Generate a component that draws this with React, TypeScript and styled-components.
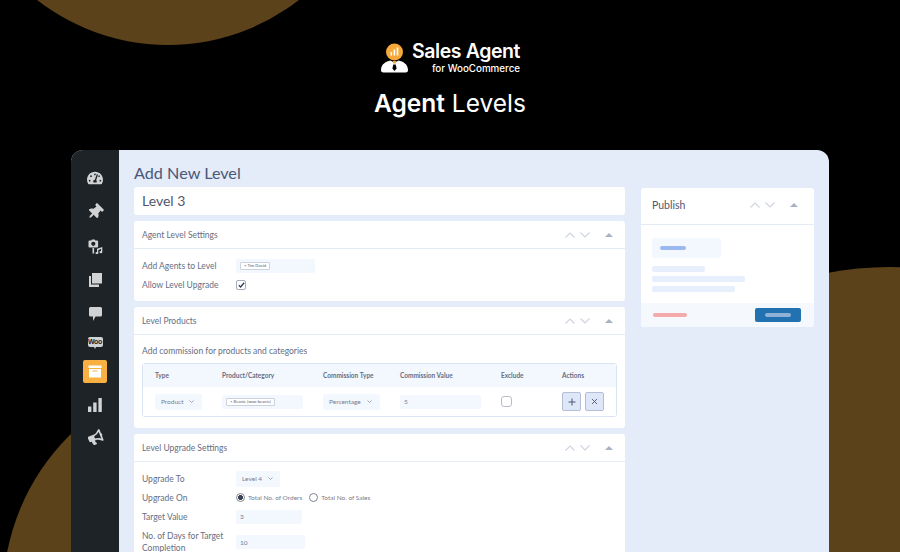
import { ReactNode } from "react";
import styled, { createGlobalStyle } from "styled-components";
import { FaTachometerAlt, FaThumbtack, FaBullhorn } from "react-icons/fa";

const GlobalStyle = createGlobalStyle`
  html, body { margin: 0; padding: 0; background: #000; }
  * { box-sizing: border-box; }
`;

const Page = styled.div`
  position: relative;
  width: 900px;
  height: 552px;
  overflow: hidden;
  background: #000;
  font-family: Lato, "Open Sans", "Liberation Sans", sans-serif;
  color: #50586f;
`;

interface BlobProps {
  $x: number;
  $y: number;
  $r: number;
}

const Blob = styled.div<BlobProps>`
  position: absolute;
  left: ${(p) => p.$x - p.$r}px;
  top: ${(p) => p.$y - p.$r}px;
  width: ${(p) => p.$r * 2}px;
  height: ${(p) => p.$r * 2}px;
  border-radius: 50%;
  background: #5c421a;
`;

const Header = styled.header`
  position: relative;
  height: 150px;
  padding-top: 42px;
  display: flex;
  flex-direction: column;
  align-items: center;
  color: #fff;
`;

const Logo = styled.div`
  display: flex;
  align-items: center;
  gap: 3px;
  height: 32px;
`;

const LogoText = styled.div`
  display: flex;
  flex-direction: column;
  align-items: flex-end;
  gap: 3px;
  font-family: Inter, "Liberation Sans", sans-serif;
`;

const LogoName = styled.div`
  font-size: 19.5px;
  line-height: 17px;
  font-weight: 600;
  letter-spacing: -0.4px;
`;

const LogoSub = styled.div`
  font-size: 9.8px;
  line-height: 11px;
  font-weight: 500;
`;

const PageTitle = styled.h1`
  margin: 15px 0 0;
  font-family: Inter, "Liberation Sans", sans-serif;
  font-size: 24.5px;
  line-height: 28px;
  font-weight: 400;
  span { font-weight: 600; }
`;

const Window = styled.div`
  position: relative;
  margin-left: 71px;
  width: 758px;
  height: 420px;
  display: flex;
  border-radius: 12px 12px 0 0;
  overflow: hidden;
  background: #e4ebf9;
`;

const Sidebar = styled.nav`
  width: 48px;
  flex: none;
  padding-top: 11px;
  background: #1d2327;
  display: flex;
  flex-direction: column;
  align-items: center;
  color: #d0d2d3;
`;

const SideItem = styled.div<{ $h: number }>`
  height: ${(p) => p.$h}px;
  width: 24px;
  display: flex;
  align-items: center;
  justify-content: center;
`;

const PinIcon = styled(FaThumbtack)`
  transform: rotate(45deg);
`;

const HornIcon = styled(FaBullhorn)`
  transform: rotate(-22deg);
`;

const ActiveBox = styled.div`
  width: 24px;
  height: 23px;
  border-radius: 2px;
  background: #f8b042;
  display: flex;
  align-items: center;
  justify-content: center;
`;

const WooBadge = styled.div`
  position: relative;
  width: 15px;
  height: 10px;
  border-radius: 2px;
  background: #d0d2d3;
  color: #1d2327;
  font-family: "Liberation Sans", sans-serif;
  font-size: 7px;
  line-height: 10px;
  font-weight: 700;
  text-align: center;
  letter-spacing: -0.3px;

  &::after {
    content: "";
    position: absolute;
    left: 6px;
    top: 10px;
    border-left: 1.5px solid transparent;
    border-right: 1.5px solid transparent;
    border-top: 2px solid #d0d2d3;
  }
`;

const Main = styled.main`
  flex: 1;
  padding: 13px 15px 0;
  display: flex;
  gap: 16px;
`;

const Column = styled.div`
  width: 491px;
  flex: none;
`;

const SideColumn = styled.div`
  flex: 1;
  padding-top: 25px;
`;

const Heading = styled.h2`
  margin: 0;
  height: 24px;
  font-size: 16.2px;
  line-height: 20px;
  font-weight: 400;
  color: #4a5876;
`;

const TitleInput = styled.div`
  height: 28px;
  margin-bottom: 6px;
  padding-left: 8px;
  border-radius: 3px;
  background: #fff;
  font-size: 14px;
  line-height: 28px;
  color: #50586f;
`;

const Card = styled.section`
  margin-bottom: 6px;
  border-radius: 3px;
  background: #fff;
`;

const CardHeader = styled.div`
  height: 28px;
  padding: 0 12px 0 8px;
  display: flex;
  align-items: center;
  justify-content: space-between;
  border-bottom: 1px solid #e4ebf5;
  font-size: 8.5px;
  color: #666e82;
`;

const Handles = styled.div`
  display: flex;
  align-items: center;
`;

const Chevron = styled.svg`
  width: 10px;
  height: 6px;
  margin-right: 5px;
  fill: none;
  stroke: #cdd4e0;
  stroke-width: 1.1;
`;

const Triangle = styled.div`
  width: 0;
  height: 0;
  margin-left: 10px;
  border-left: 4px solid transparent;
  border-right: 4px solid transparent;
  border-bottom: 4px solid #a9b1c4;
`;

const CardBody = styled.div<{ $pad: string }>`
  padding: ${(p) => p.$pad};
`;

const Row = styled.div<{ $h: number }>`
  min-height: ${(p) => p.$h}px;
  display: flex;
  align-items: center;
`;

const Label = styled.div`
  width: 94px;
  flex: none;
  font-size: 8.5px;
  line-height: 12px;
  color: #666e82;
`;

const Field = styled.div<{ $w: number }>`
  width: ${(p) => p.$w}px;
  height: 14px;
  padding: 0 4px;
  display: flex;
  align-items: center;
  border-radius: 2px;
  background: #f3f7fe;
  font-size: 6.5px;
  color: #767e92;
`;

const SelectField = styled.div<{ $w: number }>`
  width: ${(p) => p.$w}px;
  height: 16px;
  padding-left: 6px;
  display: flex;
  align-items: center;
  gap: 6px;
  border-radius: 2px;
  background: #f3f7fe;
  font-size: 6.5px;
  color: #767e92;
`;

const SelectArrow = styled.svg`
  width: 5px;
  height: 3px;
  fill: none;
  stroke: #8b93a6;
  stroke-width: 0.8;
`;

const Token = styled.span`
  height: 8px;
  padding: 0 3px;
  border: 1px solid #cbd2dd;
  border-radius: 1px;
  background: #fff;
  font-size: 4.2px;
  line-height: 6px;
  white-space: nowrap;
  color: #555d70;
`;

const Checkbox = styled.div`
  width: 10px;
  height: 10px;
  border: 1px solid #a5abb8;
  border-radius: 2px;
  background: #fff;
  display: flex;
  align-items: center;
  justify-content: center;
  color: #3a4152;
`;

const EmptyCheck = styled(Checkbox)`
  width: 11px;
  height: 11px;
  border-color: #b9bfca;
  border-radius: 3px;
`;

const Hint = styled.div`
  height: 28px;
  padding-top: 10px;
  font-size: 8.5px;
  line-height: 12px;
  color: #666e82;
`;

const TableFrame = styled.div`
  border: 1px solid #dbe4f3;
  border-radius: 3px;
  background: #fff;
`;

const TableRow = styled.div<{ $h: number; $head?: boolean }>`
  height: ${(p) => p.$h}px;
  padding-left: 12px;
  display: grid;
  grid-template-columns: 67px 101px 77px 101px 61px 1fr;
  align-items: center;
  background: ${(p) => (p.$head ? "#f3f7fe" : "#fff")};
`;

const TableHead = styled.div`
  font-size: 6.5px;
  font-weight: 700;
  color: #666e82;
`;

const ActionGroup = styled.div`
  display: flex;
  gap: 4px;
`;

const ActionButton = styled.div`
  width: 19px;
  height: 19px;
  border: 1px solid #b3bfd6;
  border-radius: 2px;
  background: #dde7f8;
  display: flex;
  align-items: center;
  justify-content: center;
  color: #4a5876;
`;

const RadioGroup = styled.div`
  display: flex;
  align-items: center;
  font-size: 6.5px;
  color: #767e92;
`;

const RadioOption = styled.div`
  display: flex;
  align-items: center;
  gap: 3px;
  margin-right: 7px;
`;

const Radio = styled.div<{ $on?: boolean }>`
  width: 9px;
  height: 9px;
  border: 1px solid #7d8494;
  border-radius: 50%;
  background: ${(p) => (p.$on ? "radial-gradient(circle, #3a4152 0 2.2px, #fff 2.8px)" : "#fff")};
`;

const PublishCard = styled.aside`
  border-radius: 3px;
  overflow: hidden;
  background: #fff;
`;

const PublishHeader = styled.div`
  height: 37px;
  padding: 0 16px 2px 11px;
  display: flex;
  align-items: center;
  justify-content: space-between;
  border-bottom: 1px solid #e4ebf5;
  font-size: 10.5px;
  color: #50586f;
`;

const PublishBody = styled.div`
  height: 78px;
  padding: 13px 11px 0;
`;

const StatusBox = styled.div`
  width: 69px;
  height: 20px;
  margin-bottom: 8px;
  padding-left: 8px;
  display: flex;
  align-items: center;
  border-radius: 3px;
  background: #f3f7fe;
`;

const Bar = styled.div<{ $w: number; $color: string; $h?: number }>`
  width: ${(p) => p.$w}px;
  height: ${(p) => p.$h ?? 4}px;
  border-radius: 2px;
  background: ${(p) => p.$color};
`;

const SkeletonStack = styled.div`
  display: flex;
  flex-direction: column;
  gap: 4px;
`;

const PublishFooter = styled.div`
  height: 24px;
  padding: 0 13px 0 12px;
  display: flex;
  align-items: center;
  justify-content: space-between;
  background: #f5f9fe;
`;

const PublishButton = styled.div`
  width: 46px;
  height: 14px;
  display: flex;
  align-items: center;
  justify-content: center;
  border-radius: 2px;
  background: #2271b1;
`;

const arrow = <path d="M0.5 0.5 L2.5 2.5 L4.5 0.5" />;

const HandleSet = () => (
  <Handles>
    <Chevron viewBox="0 0 10 6">
      <path d="M0.5 5.5 L5 1 L9.5 5.5" />
    </Chevron>
    <Chevron viewBox="0 0 10 6">
      <path d="M0.5 0.5 L5 5 L9.5 0.5" />
    </Chevron>
    <Triangle />
  </Handles>
);

const Select = ({ w, children }: { w: number; children: ReactNode }) => (
  <SelectField $w={w}>
    {children}
    <SelectArrow viewBox="0 0 5 3">{arrow}</SelectArrow>
  </SelectField>
);

const LogoMark = () => (
  <svg width="29" height="30" viewBox="0 0 29 30">
    <path d="M1 27 C1 21 6 18.5 10.5 17.5 L14.5 20 L18.5 17.5 C23 18.5 28 21 28 27 Q28 29.5 25.5 29.5 H3.5 Q1 29.5 1 27 Z" fill="#fff" />
    <path d="M13.3 21.5 h2.4 l0.9 4 l-2.1 2.5 l-2.1 -2.5 Z" fill="#000" />
    <path d="M12.5 18 h4 l-0.8 2.6 h-2.4 Z" fill="#f6a83b" />
    <circle cx="14.5" cy="9" r="8.5" fill="#f6a83b" />
    <path d="M10.5 9 h1.6 v3.5 h-1.6 Z M13.6 6.5 h1.6 v6 h-1.6 Z M16.7 4.5 h1.6 v8 h-1.6 Z" fill="#fff" />
  </svg>
);

const MediaIcon = () => (
  <svg width="15" height="15" viewBox="0 0 15 15" fill="currentColor">
    <path d="M1.5 1.5 h1.8 l0.6 -1 h2.8 l0.6 1 h1.8 a1 1 0 0 1 1 1 v5 a1 1 0 0 1 -1 1 h-7.6 a1 1 0 0 1 -1 -1 v-5 a1 1 0 0 1 1 -1 Z M5.3 2.7 a2.1 2.1 0 1 0 0.01 0 Z" fillRule="evenodd" />
    <path d="M4.5 9 h1.6 v5.5 h-1.6 Z" />
    <path d="M9 9.8 L14.3 8 V13 a1.4 1.2 0 1 1 -1.3 -1.1 V10 L10.3 10.9 V14 a1.4 1.2 0 1 1 -1.3 -1.1 Z" />
  </svg>
);

const PagesIcon = () => (
  <svg width="13" height="14" viewBox="0 0 13 14" fill="currentColor">
    <path d="M3 0 H13 V10.5 H3 Z" />
    <path d="M0 3 H2 V11.5 H10 V14 H0 Z" />
  </svg>
);

const CommentIcon = () => (
  <svg width="13" height="14" viewBox="0 0 13 14" fill="currentColor">
    <path d="M1.5 0 H11.5 A1.5 1.5 0 0 1 13 1.5 V8 A1.5 1.5 0 0 1 11.5 9.5 H6.5 L4 14 V9.5 H1.5 A1.5 1.5 0 0 1 0 8 V1.5 A1.5 1.5 0 0 1 1.5 0 Z" />
  </svg>
);

const BarsIcon = () => (
  <svg width="14" height="14" viewBox="0 0 14 14" fill="currentColor">
    <path d="M0 8.5 H3.4 V14 H0 Z M5.2 4.5 H8.6 V14 H5.2 Z M10.4 0 H13.8 V14 H10.4 Z" />
  </svg>
);

const ArchiveIcon = () => (
  <svg width="14" height="13" viewBox="0 0 14 13" fill="#fff">
    <path d="M0.5 0.5 H13.5 V3 H0.5 Z" />
    <path d="M1 4 H13 V12.5 H1 Z M4.5 5.5 V6.5 H9.5 V5.5 Z" fillRule="evenodd" />
  </svg>
);

const CheckMark = () => (
  <svg width="7" height="6" viewBox="0 0 7 6" fill="none" stroke="currentColor" strokeWidth="1.4">
    <path d="M0.8 3.2 L2.6 5 L6.2 0.8" />
  </svg>
);

const CrossMark = () => (
  <svg width="7" height="7" viewBox="0 0 7 7" fill="none" stroke="currentColor" strokeWidth="0.9">
    <path d="M1 1 L6 6 M6 1 L1 6" />
  </svg>
);

const PlusMark = () => (
  <svg width="8" height="8" viewBox="0 0 8 8" fill="none" stroke="currentColor" strokeWidth="1">
    <path d="M4 0.5 V7.5 M0.5 4 H7.5" />
  </svg>
);

const App = () => (
  <Page>
    <GlobalStyle />
    <Blob $x={168} $y={-168} $r={213} />
    <Blob $x={228} $y={595} $r={225} />
    <Blob $x={890} $y={597} $r={330} />
    <Header>
      <Logo>
        <LogoMark />
        <LogoText>
          <LogoName>Sales Agent</LogoName>
          <LogoSub>for WooCommerce</LogoSub>
        </LogoText>
      </Logo>
      <PageTitle>
        <span>Agent</span> Levels
      </PageTitle>
    </Header>
    <Window>
      <Sidebar>
        <SideItem $h={34}><FaTachometerAlt size={16} /></SideItem>
        <SideItem $h={34}><PinIcon size={16} /></SideItem>
        <SideItem $h={34}><MediaIcon /></SideItem>
        <SideItem $h={34}><PagesIcon /></SideItem>
        <SideItem $h={33}><CommentIcon /></SideItem>
        <SideItem $h={24}><WooBadge>Woo</WooBadge></SideItem>
        <SideItem $h={35}><ActiveBox><ArchiveIcon /></ActiveBox></SideItem>
        <SideItem $h={32}><BarsIcon /></SideItem>
        <SideItem $h={32}><HornIcon size={15} /></SideItem>
      </Sidebar>
      <Main>
        <Column>
          <Heading>Add New Level</Heading>
          <TitleInput>Level 3</TitleInput>
          <Card>
            <CardHeader>
              Agent Level Settings
              <HandleSet />
            </CardHeader>
            <CardBody $pad="7px 8px 7px">
              <Row $h={19}>
                <Label>Add Agents to Level</Label>
                <Field $w={79}><Token>× Tim David</Token></Field>
              </Row>
              <Row $h={19}>
                <Label>Allow Level Upgrade</Label>
                <Checkbox><CheckMark /></Checkbox>
              </Row>
            </CardBody>
          </Card>
          <Card>
            <CardHeader>
              Level Products
              <HandleSet />
            </CardHeader>
            <CardBody $pad="0 8px 11px">
              <Hint>Add commission for products and categories</Hint>
              <TableFrame>
                <TableRow $h={23} $head>
                  <TableHead>Type</TableHead>
                  <TableHead>Product/Category</TableHead>
                  <TableHead>Commission Type</TableHead>
                  <TableHead>Commission Value</TableHead>
                  <TableHead>Exclude</TableHead>
                  <TableHead>Actions</TableHead>
                </TableRow>
                <TableRow $h={29}>
                  <Select w={47}>Product</Select>
                  <Field $w={81}><Token>× Beanie (woo-beanie)</Token></Field>
                  <Select w={57}>Percentage</Select>
                  <Field $w={81}>5</Field>
                  <EmptyCheck />
                  <ActionGroup>
                    <ActionButton><PlusMark /></ActionButton>
                    <ActionButton><CrossMark /></ActionButton>
                  </ActionGroup>
                </TableRow>
              </TableFrame>
            </CardBody>
          </Card>
          <Card>
            <CardHeader>
              Level Upgrade Settings
              <HandleSet />
            </CardHeader>
            <CardBody $pad="7px 8px 6px">
              <Row $h={19}>
                <Label>Upgrade To</Label>
                <Select w={44}>Level 4</Select>
              </Row>
              <Row $h={19}>
                <Label>Upgrade On</Label>
                <RadioGroup>
                  <RadioOption><Radio $on />Total No. of Orders</RadioOption>
                  <RadioOption><Radio />Total No. of Sales</RadioOption>
                </RadioGroup>
              </Row>
              <Row $h={19}>
                <Label>Target Value</Label>
                <Field $w={66}>3</Field>
              </Row>
              <Row $h={32}>
                <Label>No. of Days for Target Completion</Label>
                <Field $w={69}>10</Field>
              </Row>
            </CardBody>
          </Card>
        </Column>
        <SideColumn>
          <PublishCard>
            <PublishHeader>
              Publish
              <HandleSet />
            </PublishHeader>
            <PublishBody>
              <StatusBox><Bar $w={26} $color="#9bb8f0" /></StatusBox>
              <SkeletonStack>
                <Bar $w={53} $h={6} $color="#e6effb" />
                <Bar $w={93} $h={6} $color="#e6effb" />
                <Bar $w={83} $h={6} $color="#e6effb" />
              </SkeletonStack>
            </PublishBody>
            <PublishFooter>
              <Bar $w={34} $color="#f4a9ab" />
              <PublishButton><Bar $w={26} $color="#8fb1d8" /></PublishButton>
            </PublishFooter>
          </PublishCard>
        </SideColumn>
      </Main>
    </Window>
  </Page>
);

export default App;
